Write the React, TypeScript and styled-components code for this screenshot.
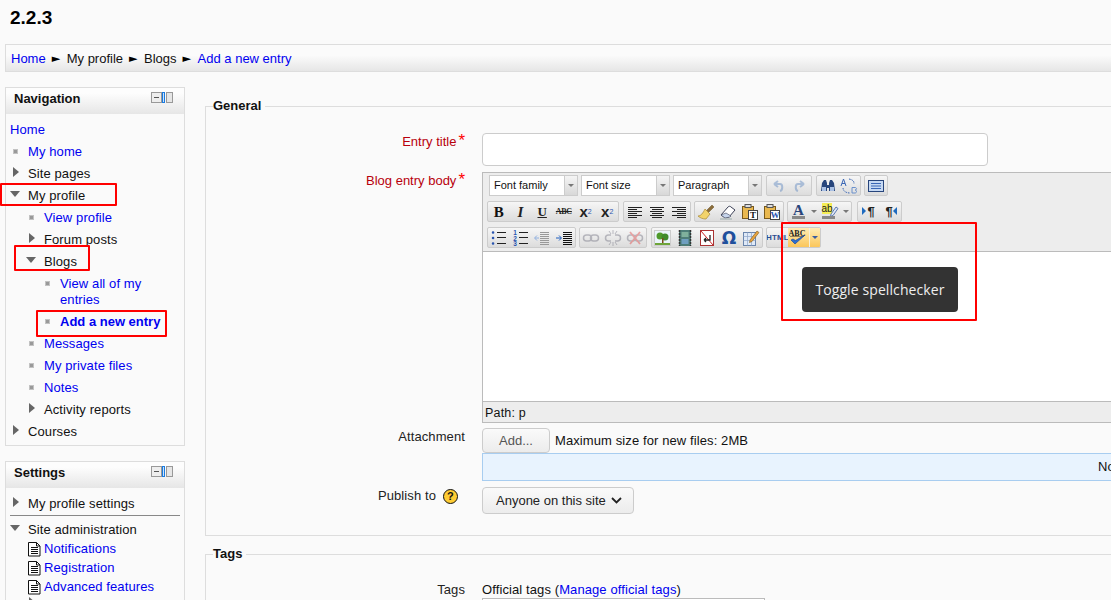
import React from "react";
import styled, { createGlobalStyle } from "styled-components";

const Global = createGlobalStyle`
  html, body { margin: 0; padding: 0; background: #fafafa; }
  body { font-family: "Liberation Sans", Arial, sans-serif; font-size: 13px; line-height: 16px; color: #111; }
  a { color: #0000f0; text-decoration: none; }
`;

const Page = styled.div`
  position: relative;
  width: 1111px;
  height: 600px;
  overflow: hidden;
  background: #fafafa;
`;
const Inner = styled.div`
  width: 1400px;
  padding-left: 5px;
`;
const TopHead = styled.header`
  height: 44px;
  padding: 6px 0 0 5px;
  box-sizing: border-box;
`;
const Title = styled.h1`
  margin: 0;
  font-size: 19px;
  line-height: 23px;
  font-weight: bold;
  color: #000;
`;
const Crumbs = styled.nav`
  height: 28px;
  box-sizing: border-box;
  border: 1px solid #ddd;
  border-right: 0;
  background: linear-gradient(#fbfbfb 40%, #e6e6e6);
  display: flex;
  align-items: center;
  padding-left: 5px;
  padding-top: 1px;
`;
const Sep = styled.span`
  font-family: "DejaVu Sans", sans-serif;
  font-size: 11px;
  color: #000;
  margin: 0 6px 0 5.5px;
  width: 9.5px;
  text-align: center;
`;
const Columns = styled.div`
  display: flex;
  align-items: flex-start;
  margin-top: 15px;
`;
const Side = styled.aside`
  width: 180px;
  flex: none;
  margin-right: 20px;
`;
const Block = styled.section`
  box-sizing: border-box;
  border: 1px solid #ddd;
  margin-bottom: 15px;
  padding-bottom: 2px;
  background: #fafafa;
`;
const BlockHead = styled.div`
  box-sizing: border-box;
  height: 26px;
  background: linear-gradient(#fdfdfd 20%, #e6e6e6);
  display: flex;
  align-items: flex-start;
  justify-content: space-between;
  padding: 3px 10px 0 8px;
`;
const BlockTitle = styled.h2`
  margin: 0;
  font-size: 13px;
  line-height: 16px;
  font-weight: bold;
  color: #111;
`;
const Tree = styled.ul`
  list-style: none;
  margin: 0;
  padding: 5px 8px 0 4px;
  letter-spacing: 0.1px;
  b { letter-spacing: 0; }
`;
const Row = styled.li<{ $depth: number }>`
  display: flex;
  align-items: flex-start;
  padding: 3px 0;
  margin-left: ${(p) => (p.$depth > 0 ? (p.$depth - 1) * 16 : 0)}px;
`;
const Slot = styled.span`
  flex: none;
  width: 18px;
  height: 16px;
  position: relative;
`;
const Bullet = styled.i`
  position: absolute;
  left: 3px;
  top: 5px;
  width: 3px;
  height: 3px;
  border: 1px solid #c2c2c2;
  background: #999;
`;
const ArrowRight = styled.i`
  position: absolute;
  left: 3px;
  top: 1px;
  width: 0;
  height: 0;
  border-left: 6px solid #666;
  border-top: 5.5px solid transparent;
  border-bottom: 5.5px solid transparent;
`;
const ArrowDown = styled.i`
  position: absolute;
  left: 0;
  top: 3px;
  width: 0;
  height: 0;
  border-top: 6px solid #666;
  border-left: 5.5px solid transparent;
  border-right: 5.5px solid transparent;
`;
const Rule = styled.hr`
  margin: 0 -4px 2px 0;
  border: 0;
  border-top: 1px solid #888;
`;
const AdminRow = styled.div`
  display: flex;
  height: 17px;
  padding-top: 4px;
`;
const LeafList = styled.ul`
  list-style: none;
  margin: 0;
  padding: 0 0 0 17px;
`;
const Leaf = styled.li`
  height: 19px;
  display: flex;
  align-items: center;
  a { margin-left: 2px; }
`;
const BranchStub = styled.li`
  position: relative;
  height: 40px;
  margin-left: -1px;
`;

const Main = styled.main`
  width: 1100px;
  flex: none;
`;
const Fields = styled.fieldset<{ $top?: number }>`
  margin: ${(p) => p.$top ?? 0}px 0 10px;
  padding: 0;
  border: 1px solid #ddd;
  min-width: 0;
`;
const Legend = styled.legend`
  margin-left: 7px;
  padding: 0 4px 0 0;
  font-weight: bold;
  font-size: 13px;
  line-height: 16px;
  background: #fafafa;
`;
const GeneralBody = styled.div`
  padding: 19px 0 21px;
`;
const FormRow = styled.div<{ $gap?: number }>`
  display: flex;
  margin-bottom: ${(p) => p.$gap ?? 0}px;
`;
const Label = styled.label<{ $req?: boolean; $flush?: boolean }>`
  flex: none;
  box-sizing: border-box;
  width: 259px;
  margin-right: 17px;
  padding-top: ${(p) => (p.$flush ? 0 : 1)}px;
  text-align: right;
  letter-spacing: ${(p) => (p.$req ? 0 : 0.1)}px;
  color: ${(p) => (p.$req ? "#b8000c" : "#222")};
  white-space: nowrap;
  display: flex;
  justify-content: flex-end;
  align-items: flex-start;
`;
const Star = styled.span`
  color: #f00;
  font-size: 17px;
  line-height: 16px;
  margin-left: 2px;
  position: relative;
  top: -1px;
`;
const Help = styled.span`
  width: 13px;
  height: 13px;
  border-radius: 50%;
  border: 1px solid #111;
  background: #fc3;
  color: #111;
  font-weight: bold;
  font-size: 11px;
  line-height: 13px;
  text-align: center;
  margin: 1px 7px 0 7px;
`;
const TextInput = styled.div`
  box-sizing: border-box;
  width: 506px;
  height: 33px;
  background: #fff;
  border: 1px solid #ccc;
  border-radius: 4px;
`;
const Editor = styled.div`
  position: relative;
  box-sizing: border-box;
  width: 1000px;
  height: 251px;
  border: 1px solid #bbb;
  background: #fff;
`;
const Toolbar = styled.div`
  box-sizing: border-box;
  height: 79px;
  padding-top: 2px;
  background: #ededed;
  border-bottom: 1px solid #bbb;
  display: flex;
  flex-direction: column;
  gap: 5px;
`;
const ToolRow = styled.div`
  display: flex;
  height: 21px;
`;
const Select = styled.div<{ $ml: number }>`
  box-sizing: border-box;
  width: 89px;
  height: 21px;
  margin-left: ${(p) => p.$ml}px;
  border: 1px solid #ccc;
  background: #fff;
  display: flex;
  font-size: 11px;
  line-height: 19px;
`;
const SelectText = styled.span`
  flex: 1;
  padding-left: 4px;
`;
const SelectArrow = styled.span`
  width: 12px;
  flex: none;
  border-left: 1px solid #ccc;
  background: linear-gradient(#f4f4f4, #d8d8d8);
  display: flex;
  align-items: center;
  justify-content: center;
`;
const Caret = styled.i<{ $color?: string }>`
  width: 0;
  height: 0;
  border-top: 3px solid ${(p) => p.$color ?? "#777"};
  border-left: 3px solid transparent;
  border-right: 3px solid transparent;
`;
const Group = styled.div<{ $w: number; $ml: number }>`
  box-sizing: border-box;
  width: ${(p) => p.$w}px;
  height: 21px;
  margin-left: ${(p) => p.$ml}px;
  border: 1px solid #ccc;
  border-radius: 2px;
  background: linear-gradient(#f6f6f6, #dcdcdc);
  display: flex;
  overflow: hidden;
`;
const Tool = styled.span<{ $off?: boolean; $hot?: boolean; $sp?: number }>`
  flex: ${(p) => p.$sp ?? 1} 1 0;
  display: flex;
  align-items: center;
  justify-content: center;
  min-width: 0;
  opacity: ${(p) => (p.$off ? 0.4 : 1)};
  background: ${(p) => (p.$hot ? "linear-gradient(#ffedb4, #fbc65a)" : "none")};
`;
const HotCaret = styled(Tool)`
  border-left: 1px solid #f7f0d8;
`;
const GlyphB = styled.b`
  font-family: "Liberation Serif", serif;
  font-size: 15px;
  color: #111;
`;
const GlyphI = styled.i`
  font-family: "Liberation Serif", serif;
  font-weight: bold;
  font-size: 15px;
  color: #222;
`;
const GlyphU = styled.b`
  font-family: "Liberation Serif", serif;
  font-size: 13px;
  text-decoration: underline;
  color: #222;
`;
const GlyphS = styled.span`
  font-family: "Liberation Serif", serif;
  font-size: 8px;
  font-weight: bold;
  text-decoration: line-through;
  color: #222;
  letter-spacing: -0.3px;
`;
const GlyphX = styled.b`
  font-size: 15px;
  color: #222;
  line-height: 13px;
`;
const GlyphSub = styled.sub`
  font-size: 7px;
  line-height: 7px;
  color: #2a55b0;
  vertical-align: -3px;
`;
const GlyphSup = styled.sup`
  font-size: 7px;
  line-height: 7px;
  color: #2a55b0;
  vertical-align: 6px;
`;
const GlyphOmega = styled.b`
  font-family: "DejaVu Sans", sans-serif;
  font-size: 17px;
  color: #1f4f9c;
`;
const GlyphHtml = styled.b`
  font-size: 8px;
  color: #2b4c90;
  letter-spacing: 0.1px;
`;
const EditArea = styled.div`
  position: relative;
  height: 149px;
  background: #fff;
`;
const PathBar = styled.div`
  box-sizing: border-box;
  height: 21px;
  border-top: 1px solid #bbb;
  background: #ededed;
  padding: 3px 0 0 2px;
  font-size: 12.5px;
  letter-spacing: 0.2px;
`;
const Tooltip = styled.div`
  position: absolute;
  left: 319px;
  top: 15px;
  width: 156px;
  height: 45px;
  border-radius: 4px;
  background: #333;
  color: #eee;
  font-family: "Open Sans", sans-serif;
  font-size: 14px;
  letter-spacing: 0.1px;
  line-height: 45px;
  text-align: center;
`;
const AddButton = styled.span`
  box-sizing: border-box;
  width: 68px;
  height: 25px;
  border: 1px solid #ccc;
  border-radius: 4px;
  background: linear-gradient(#fafafa, #ececec);
  color: #555;
  text-align: center;
  line-height: 23px;
`;
const Note = styled.span`
  margin-left: 5px;
  line-height: 25px;
  letter-spacing: 0.1px;
  white-space: nowrap;
`;
const AttachCol = styled.div`
  display: flex;
  flex-direction: column;
`;
const AttachTop = styled.div`
  display: flex;
`;
const Dropzone = styled.div`
  box-sizing: border-box;
  width: 1000px;
  height: 28px;
  margin: 0 0 6px;
  padding-left: 615px;
  background: #e8f3fe;
  border: 1px solid #a8cdf0;
  line-height: 26px;
  white-space: nowrap;
`;
const Dropdown = styled.div`
  box-sizing: border-box;
  width: 152px;
  height: 27px;
  border: 1px solid #ccc;
  border-radius: 4px;
  background: linear-gradient(#fafafa, #ececec);
  display: flex;
  align-items: center;
  padding-left: 13px;
  gap: 5px;
  color: #222;
  white-space: nowrap;
`;
const TagsBody = styled.div`
  padding-top: 20px;
`;
const TagLine = styled.div`
  letter-spacing: 0.1px;
`;
const TagList = styled.div`
  box-sizing: border-box;
  width: 283px;
  height: 120px;
  border: 1px solid #bbb;
  background: #fff;
`;
const Mark = styled.div<{ $x: number; $y: number; $w: number; $h: number }>`
  position: absolute;
  left: ${(p) => p.$x}px;
  top: ${(p) => p.$y}px;
  width: ${(p) => p.$w}px;
  height: ${(p) => p.$h}px;
  box-sizing: border-box;
  border: 2px solid #f00;
  border-radius: 1px;
  pointer-events: none;
`;

const BlockControls = () => (
  <svg width="23" height="12" viewBox="0 0 23 12" style={{ marginTop: 1 }}>
    <rect x=".5" y=".5" width="10" height="10" fill="#eee" stroke="#999" />
    <path d="M3 5.500h5" stroke="#555" />
    <rect x="11.500" y=".5" width="2" height="10" fill="#cfe3f7" stroke="#1a7be0" />
    <rect x="15.500" y=".5" width="6" height="10" fill="#e6e6e6" stroke="#999" />
  </svg>
);
const Doc = () => (
  <svg width="15" height="16" viewBox="0 0 15 16" style={{ flex: "none" }}>
    <path d="M1.500 1.500h8l3.500 3.500v10h-11.500z" fill="#fff" stroke="#111" />
    <path d="M9.500 1.500v3.500h3.500M4 6.500h7M4 8.500h7M4 10.500h7M4 12.500h7" fill="none" stroke="#111" />
  </svg>
);

const S = ({ children }: { children: React.ReactNode }) => (
  <svg width="18" height="18" viewBox="0 0 18 18" style={{ flex: "none" }}>{children}</svg>
);
const Lines = ({ x, ys, w, c = "#222" }: { x: number; ys: number[]; w: number[]; c?: string }) => (
  <path d={ys.map((y, i) => `M${x} ${y + 0.5}h${w[i]}`).join("")} stroke={c} fill="none" />
);
const Undo = () => <S><path d="M5 7l4-3M5 7l4 3M5 7h6c3 0 3 6 0 7" fill="none" stroke="#4a78b8" strokeWidth="2" /></S>;
const Redo = () => <S><path d="M13 7l-4-3M13 7l-4 3M13 7H7c-3 0-3 6 0 7" fill="none" stroke="#4a78b8" strokeWidth="2" /></S>;
const Find = () => (
  <S>
    <path d="M2 14l1-8 2-3h2l1 3v8zM10 14V6l1-3h2l2 3 1 8z" fill="#27457c" />
    <path d="M8 8h2v3H8z" fill="#27457c" />
    <rect x="3" y="10" width="4" height="4" fill="#a9c0e4" />
    <rect x="11" y="10" width="4" height="4" fill="#a9c0e4" />
  </S>
);
const Replace = () => (
  <S>
    <path d="M1 9l2.500-7L6 9M2 6.500h3" fill="none" stroke="#3a66b5" />
    <path d="M9 2c5 1 5 3 5 5" fill="none" stroke="#3a66b5" strokeDasharray="1.500 1" />
    <path d="M3 11c0 3 3 5 7 5" fill="none" stroke="#3a66b5" strokeDasharray="1.500 1" />
    <path d="M12 10.500h3c2 0 2 2.500 0 2.500c2 0 2 3 0 3h-3z" fill="none" stroke="#6a90cc" />
  </S>
);
const Full = () => (
  <S>
    <rect x="1.500" y="3.500" width="15" height="11" fill="#c6d9f3" stroke="#27457c" />
    <path d="M4 6.500h10M4 9h10M4 11.500h10" stroke="#3a66b5" />
  </S>
);
const AlignL = () => <S><Lines x={2} ys={[4, 6, 8, 10, 12, 14]} w={[14, 9, 14, 9, 14, 9]} /></S>;
const AlignC = () => <S><Lines x={2} ys={[4, 8, 12]} w={[14, 14, 14]} /><Lines x={4} ys={[6, 10, 14]} w={[10, 10, 10]} /></S>;
const AlignR = () => <S><Lines x={2} ys={[4, 8, 12]} w={[14, 14, 14]} /><Lines x={7} ys={[6, 10, 14]} w={[9, 9, 9]} /></S>;
const Brush = () => (
  <S>
    <path d="M9 8l6-6 2 2-6 6z" fill="#8a6d3b" stroke="#6b5226" strokeWidth=".5" />
    <path d="M8 6l5 5-4 5c-3 0-6-1-8-3 3 0 5-3 7-7z" fill="#f2d36b" stroke="#a98a33" strokeWidth=".7" />
  </S>
);
const Eraser = () => (
  <S>
    <path d="M2 12l7-8c1-1 2-1 3 0l4 3-6 7H5z" fill="#fff" stroke="#3b3f55" />
    <path d="M2 12l4 3 5-1 1-1-5-3z" fill="#c6d5ec" stroke="#3b3f55" strokeWidth=".6" />
    <path d="M1 16h12" stroke="#9aa" />
  </S>
);
const Paste = ({ l, c }: { l: string; c: string }) => (
  <S>
    <rect x="1.500" y="3.500" width="11" height="12" fill="#e9b84f" stroke="#7a5a1c" />
    <rect x="4" y="1.500" width="6" height="3" fill="#ddd" stroke="#555" />
    <rect x="7.500" y="7.500" width="9" height="9" fill="#fff" stroke="#444" />
    <text x="12" y="15" textAnchor="middle" fontFamily="Liberation Serif" fontWeight="bold" fontSize="9" fill={c}>{l}</text>
  </S>
);
const FontColor = () => (
  <S>
    <text x="8.500" y="12" textAnchor="middle" fontFamily="Liberation Serif" fontWeight="bold" fontSize="15" fill="#27457c">A</text>
    <rect x="2" y="13" width="13" height="3" fill="#888" />
  </S>
);
const HighColor = () => (
  <S>
    <rect x="1" y="0" width="10" height="11" fill="#f5ee55" />
    <text x="6" y="9" textAnchor="middle" fontFamily="Liberation Sans" fontSize="10" fill="#222">ab</text>
    <path d="M10 11l5-7 2 1.500-5 7-2.500 1z" fill="#dfe7f5" stroke="#3a5da0" strokeWidth=".8" />
    <rect x="1" y="13" width="13" height="3" fill="#888" />
  </S>
);
const Ltr = () => (
  <S>
    <path d="M2 4v8l4-4z" fill="#1f6bc0" />
    <text x="11" y="13" textAnchor="middle" fontFamily="Liberation Sans" fontWeight="bold" fontSize="13" fill="#222">¶</text>
  </S>
);
const Rtl = () => (
  <S>
    <text x="8" y="13" textAnchor="middle" fontFamily="Liberation Sans" fontWeight="bold" fontSize="13" fill="#222">¶</text>
    <path d="M16 4v8l-4-4z" fill="#1f6bc0" />
  </S>
);
const Bul = () => (
  <S>
    <path d="M3 3.500h.1M3 9h.1M3 14.500h.1" stroke="#2a55b0" strokeWidth="2.500" strokeLinecap="round" />
    <Lines x={7} ys={[3, 8, 14]} w={[9, 9, 9]} />
  </S>
);
const Num = () => (
  <S>
    <text x="3" y="6" textAnchor="middle" fontFamily="Liberation Sans" fontWeight="bold" fontSize="6.500" fill="#2a55b0">1</text>
    <text x="3" y="11.500" textAnchor="middle" fontFamily="Liberation Sans" fontWeight="bold" fontSize="6.500" fill="#2a55b0">2</text>
    <text x="3" y="17" textAnchor="middle" fontFamily="Liberation Sans" fontWeight="bold" fontSize="6.500" fill="#2a55b0">3</text>
    <Lines x={7} ys={[3, 8, 14]} w={[9, 9, 9]} />
  </S>
);
const Outdent = () => (
  <S>
    <Lines x={7} ys={[3, 5, 7, 9, 11, 13, 15]} w={[9, 9, 9, 9, 9, 9, 9]} c="#999" />
    <path d="M6 9H2M4 6.500L1.500 9 4 11.500" fill="none" stroke="#8fb0e0" />
  </S>
);
const Indent = () => (
  <S>
    <Lines x={8} ys={[3, 5, 7, 9, 11, 13, 15]} w={[9, 9, 9, 9, 9, 9, 9]} c="#111" />
    <path d="M1 9h5M4 6.500L6.500 9 4 11.500" fill="none" stroke="#1f5fc0" />
  </S>
);
const Link = () => (
  <S>
    <rect x="1.500" y="6" width="8" height="6" rx="3" fill="none" stroke="#667" strokeWidth="1.500" />
    <rect x="8.500" y="6" width="8" height="6" rx="3" fill="none" stroke="#667" strokeWidth="1.500" />
  </S>
);
const Unlink = () => (
  <S>
    <path d="M7 6H4.500a3 3 0 000 6H7M11 6h2.500a3 3 0 010 6H11" fill="none" stroke="#667" strokeWidth="1.500" />
    <path d="M9 1v4M5 2l2 3M13 2l-2 3M9 13v4M5 16l2-3M13 16l-2-3" stroke="#667" />
  </S>
);
const Anchor = () => (
  <S>
    <rect x="1.500" y="6" width="8" height="6" rx="3" fill="none" stroke="#667" strokeWidth="1.500" />
    <rect x="8.500" y="6" width="8" height="6" rx="3" fill="none" stroke="#667" strokeWidth="1.500" />
    <path d="M4 3l10 12M14 3L4 15" stroke="#d33" strokeWidth="1.800" />
  </S>
);
const Picture = () => (
  <S>
    <rect x=".5" y="1.500" width="16" height="15" fill="#eaf4fb" stroke="#ccc" />
    <path d="M1 14h15v2H1z" fill="#6ea53a" />
    <circle cx="6" cy="7" r="3.500" fill="#4f9a2c" />
    <circle cx="11" cy="8" r="3.500" fill="#3f8a2c" />
    <path d="M8 9h1.500v5H8z" fill="#7a4a1c" />
  </S>
);
const Film = () => (
  <S>
    <rect x="3" y="1" width="12" height="16" fill="#4d7d78" />
    <rect x="5.500" y="3" width="7" height="5" fill="#7fb09c" />
    <rect x="5.500" y="10" width="7" height="5" fill="#6f9fc0" />
    <path d="M3.500 1v16M14.500 1v16" stroke="#333" strokeWidth="1.500" strokeDasharray="2 1" />
  </S>
);
const PageBreak = () => (
  <S>
    <rect x="2.500" y="1.500" width="13" height="15" fill="#fff" stroke="#a33" />
    <path d="M3 2l12 14" stroke="#c22" />
    <path d="M6 11h6V6M6 11l2-2M6 11l2 2" fill="none" stroke="#222" strokeWidth="1.300" />
  </S>
);
const TableEdit = () => (
  <S>
    <rect x="1.500" y="3.500" width="12" height="13" fill="#dfe9f7" stroke="#6a85ad" />
    <path d="M1.500 7.500h12M1.500 11.500h12M5.500 3.500v13M9.500 3.500v13" stroke="#8fa6c8" strokeWidth=".7" />
    <path d="M8 11l7-9 2 1.500-7 9-2.500 1z" fill="#e9a33f" stroke="#7a5a1c" strokeWidth=".6" />
  </S>
);
const Spell = () => (
  <S>
    <text x="8" y="7" textAnchor="middle" fontFamily="Liberation Serif" fontWeight="bold" fontSize="8" fill="#222">ABC</text>
    <path d="M1 7.500h14" stroke="#222" strokeWidth=".5" />
    <path d="M2 11l4 4 10-9-9.500 5.500L4 10z" fill="#2d6fd0" stroke="#1c4a9c" strokeWidth=".7" />
  </S>
);

const Chevron = () => (
  <svg width="11" height="7" viewBox="0 0 11 7">
    <path d="M1 1l4.500 4.500L10 1" fill="none" stroke="#222" strokeWidth="1.800" />
  </svg>
);

type Kind = "leaf" | "closed" | "open" | "none";
const NodeRow = ({ depth, kind, children }: { depth: number; kind: Kind; children: React.ReactNode }) => (
  <Row $depth={depth}>
    {kind !== "none" && (
      <Slot>
        {kind === "leaf" && <Bullet />}
        {kind === "closed" && <ArrowRight />}
        {kind === "open" && <ArrowDown />}
      </Slot>
    )}
    <span>{children}</span>
  </Row>
);

export default function App() {
  return (
    <Page>
      <Global />
      <Inner>
        <TopHead>
          <Title>2.2.3</Title>
        </TopHead>
        <Crumbs>
          <a href="#">Home</a>
          <Sep>►</Sep>
          <span>My profile</span>
          <Sep>►</Sep>
          <span>Blogs</span>
          <Sep>►</Sep>
          <a href="#">Add a new entry</a>
        </Crumbs>
        <Columns>
          <Side>
            <Block>
              <BlockHead>
                <BlockTitle>Navigation</BlockTitle>
                <BlockControls />
              </BlockHead>
              <Tree>
                <NodeRow depth={0} kind="none"><a href="#">Home</a></NodeRow>
                <NodeRow depth={1} kind="leaf"><a href="#">My home</a></NodeRow>
                <NodeRow depth={1} kind="closed">Site pages</NodeRow>
                <NodeRow depth={1} kind="open">My profile</NodeRow>
                <NodeRow depth={2} kind="leaf"><a href="#">View profile</a></NodeRow>
                <NodeRow depth={2} kind="closed">Forum posts</NodeRow>
                <NodeRow depth={2} kind="open">Blogs</NodeRow>
                <NodeRow depth={3} kind="leaf"><a href="#">View all of my entries</a></NodeRow>
                <NodeRow depth={3} kind="leaf"><a href="#"><b>Add a new entry</b></a></NodeRow>
                <NodeRow depth={2} kind="leaf"><a href="#">Messages</a></NodeRow>
                <NodeRow depth={2} kind="leaf"><a href="#">My private files</a></NodeRow>
                <NodeRow depth={2} kind="leaf"><a href="#">Notes</a></NodeRow>
                <NodeRow depth={2} kind="closed">Activity reports</NodeRow>
                <NodeRow depth={1} kind="closed">Courses</NodeRow>
              </Tree>
            </Block>
            <Block>
              <BlockHead>
                <BlockTitle>Settings</BlockTitle>
                <BlockControls />
              </BlockHead>
              <Tree>
                <NodeRow depth={1} kind="closed">My profile settings</NodeRow>
                <Rule />
                <AdminRow>
                  <Slot><ArrowDown /></Slot>
                  <span>Site administration</span>
                </AdminRow>
                <LeafList>
                  <Leaf><Doc /><a href="#">Notifications</a></Leaf>
                  <Leaf><Doc /><a href="#">Registration</a></Leaf>
                  <Leaf><Doc /><a href="#">Advanced features</a></Leaf>
                  <BranchStub><ArrowRight /></BranchStub>
                </LeafList>
              </Tree>
            </Block>
          </Side>
          <Main>
            <Fields $top={11}>
              <Legend>General</Legend>
              <GeneralBody>
                <FormRow $gap={6}>
                  <Label $req>Entry title<Star>*</Star></Label>
                  <TextInput />
                </FormRow>
                <FormRow $gap={5}>
                  <Label $req>Blog entry body<Star>*</Star></Label>
                  <Editor>
                    <Toolbar>
                      <ToolRow>
                        <Select $ml={6}><SelectText>Font family</SelectText><SelectArrow><Caret /></SelectArrow></Select>
                        <Select $ml={3}><SelectText>Font size</SelectText><SelectArrow><Caret /></SelectArrow></Select>
                        <Select $ml={3}><SelectText>Paragraph</SelectText><SelectArrow><Caret /></SelectArrow></Select>
                        <Group $w={46} $ml={4}><Tool $off><Undo /></Tool><Tool $off><Redo /></Tool></Group>
                        <Group $w={45} $ml={4}><Tool><Find /></Tool><Tool><Replace /></Tool></Group>
                        <Group $w={24} $ml={3}><Tool><Full /></Tool></Group>
                      </ToolRow>
                      <ToolRow>
                        <Group $w={132} $ml={4}>
                          <Tool><GlyphB>B</GlyphB></Tool>
                          <Tool><GlyphI>I</GlyphI></Tool>
                          <Tool><GlyphU>U</GlyphU></Tool>
                          <Tool><GlyphS>ABC</GlyphS></Tool>
                          <Tool><GlyphX>x</GlyphX><GlyphSub>2</GlyphSub></Tool>
                          <Tool><GlyphX>x</GlyphX><GlyphSup>2</GlyphSup></Tool>
                        </Group>
                        <Group $w={68} $ml={4}><Tool><AlignL /></Tool><Tool><AlignC /></Tool><Tool><AlignR /></Tool></Group>
                        <Group $w={90} $ml={3}>
                          <Tool><Brush /></Tool>
                          <Tool><Eraser /></Tool>
                          <Tool><Paste l="T" c="#111" /></Tool>
                          <Tool><Paste l="W" c="#2a55b0" /></Tool>
                        </Group>
                        <Group $w={65} $ml={3}>
                          <Tool $sp={2}><FontColor /></Tool>
                          <Tool $sp={1}><Caret /></Tool>
                          <Tool $sp={2}><HighColor /></Tool>
                          <Tool $sp={1}><Caret /></Tool>
                        </Group>
                        <Group $w={45} $ml={5}><Tool><Ltr /></Tool><Tool><Rtl /></Tool></Group>
                      </ToolRow>
                      <ToolRow>
                        <Group $w={89} $ml={4}><Tool><Bul /></Tool><Tool><Num /></Tool><Tool><Outdent /></Tool><Tool><Indent /></Tool></Group>
                        <Group $w={68} $ml={3}><Tool $off><Link /></Tool><Tool $off><Unlink /></Tool><Tool $off><Anchor /></Tool></Group>
                        <Group $w={112} $ml={4}><Tool><Picture /></Tool><Tool><Film /></Tool><Tool><PageBreak /></Tool><Tool><GlyphOmega>Ω</GlyphOmega></Tool><Tool><TableEdit /></Tool></Group>
                        <Group $w={55} $ml={3}>
                          <Tool $sp={2}><GlyphHtml>HTML</GlyphHtml></Tool>
                          <Tool $sp={2} $hot><Spell /></Tool>
                          <HotCaret $sp={1} $hot><Caret $color="#3a5da0" /></HotCaret>
                        </Group>
                      </ToolRow>
                    </Toolbar>
                    <EditArea>
                      <Tooltip>Toggle spellchecker</Tooltip>
                    </EditArea>
                    <PathBar>Path: p</PathBar>
                  </Editor>
                </FormRow>
                <FormRow>
                  <Label>Attachment</Label>
                  <AttachCol>
                    <AttachTop>
                      <AddButton>Add...</AddButton>
                      <Note>Maximum size for new files: 2MB</Note>
                    </AttachTop>
                    <Dropzone>No files selected</Dropzone>
                  </AttachCol>
                </FormRow>
                <FormRow>
                  <Label>Publish to<Help>?</Help></Label>
                  <Dropdown>Anyone on this site<Chevron /></Dropdown>
                </FormRow>
              </GeneralBody>
            </Fields>
            <Fields>
              <Legend>Tags</Legend>
              <TagsBody>
                <FormRow>
                  <Label $flush>Tags</Label>
                  <div>
                    <TagLine>Official tags (<a href="#">Manage official tags</a>)</TagLine>
                    <TagList />
                  </div>
                </FormRow>
              </TagsBody>
            </Fields>
          </Main>
        </Columns>
      </Inner>
      <Mark $x={0} $y={183} $w={117} $h={23} />
      <Mark $x={14} $y={245} $w={76} $h={26} />
      <Mark $x={36} $y={310} $w={131} $h={27} />
      <Mark $x={781} $y={222} $w={196} $h={99} />
    </Page>
  );
}
